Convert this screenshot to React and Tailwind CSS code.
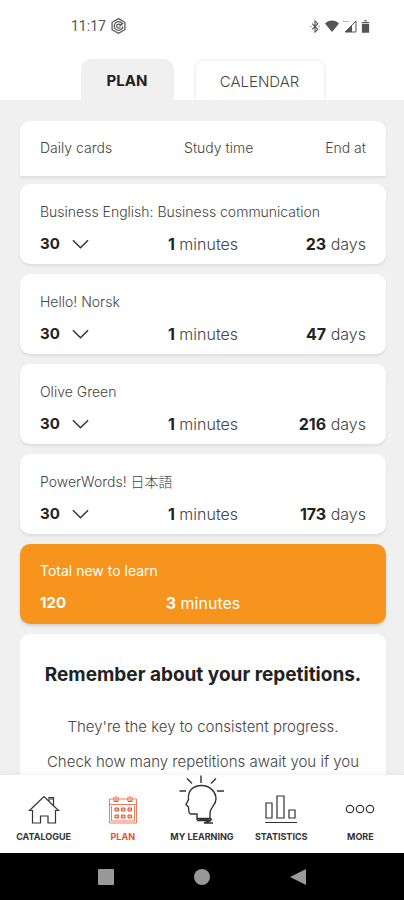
import { useState } from 'react';

const initialCourses = [
  { id: 1, name: 'Business English: Business communication', cards: 30, minutes: 1, days: 23 },
  { id: 2, name: 'Hello! Norsk', cards: 30, minutes: 1, days: 47 },
  { id: 3, name: 'Olive Green', cards: 30, minutes: 1, days: 216 },
  { id: 4, name: 'PowerWords! 日本語', cards: 30, minutes: 1, days: 173 },
];

const StatusBar = () => (
  <div className="flex items-center justify-between pt-4 pr-[34px] pl-[71px] text-[#555]">
    <div className="flex items-center gap-1">
      <span className="font-['Roboto',sans-serif] text-[14px] leading-5 font-normal">11:17</span>
      <svg width="17" height="18" viewBox="0 0 18 18" fill="none" stroke="currentColor" strokeWidth="1.3">
        <path d="M9 1.2l6.8 3.9v7.8L9 16.8l-6.8-3.9V5.1z" />
        <path d="M12.8 6.4A4.6 4.6 0 1 0 13.6 9.6" />
        <path d="M11 7.8A2.2 2.2 0 1 0 11 10.4M10 9.2l4-3.4" />
      </svg>
    </div>
    <div className="flex items-center gap-1">
      <svg width="12" height="13" viewBox="0 0 12 14" fill="none" stroke="currentColor" strokeWidth="1.2">
        <path d="M3 4l6 6-3 3V1l3 3-6 6" />
        <path d="M1 7h1M10 7h1" />
      </svg>
      <svg width="14" height="12" viewBox="0 0 14 12" fill="currentColor">
        <path d="M7 12L0 3.4C4-.6 10-.6 14 3.4z" />
      </svg>
      <svg width="14" height="13" viewBox="0 0 14 13">
        <path d="M13 1v11H2z" fill="none" stroke="currentColor" strokeWidth="1" />
        <path d="M9 5v7H2z" fill="currentColor" />
        <path d="M0 1.5h6" stroke="currentColor" strokeWidth="1" strokeDasharray="1.5 0.7" opacity="0.6" />
      </svg>
      <svg width="9" height="13" viewBox="0 0 10 14" fill="currentColor">
        <path d="M3.5 0h3v1.2h-3z" />
        <path d="M1 2h8v1.5H1zM1 4.3h8V14H1z" />
      </svg>
    </div>
  </div>
);

const Course = ({ course, onChange }) => (
  <div className="h-20 rounded-[10px] bg-white px-5 pt-4 shadow-[0_2px_3px_rgba(0,0,0,0.08)]">
    <label htmlFor={`cards-${course.id}`} className="block truncate text-[14px] leading-6">
      {course.name}
    </label>
    <div className="mt-2 grid grid-cols-3 items-center text-[16px] leading-6">
      <div className="flex items-center gap-3">
        <select
          id={`cards-${course.id}`}
          value={course.cards}
          onChange={(e) => onChange(course.id, Number(e.target.value))}
          className="w-5 appearance-none bg-transparent text-[15px] font-bold text-[#222]"
        >
          <option value={10}>10</option>
          <option value={20}>20</option>
          <option value={30}>30</option>
        </select>
        <svg width="17" height="10" viewBox="0 0 18 10" fill="none" stroke="#333" strokeWidth="1.6" className="pointer-events-none">
          <path d="M1 1l8 8 8-8" />
        </svg>
      </div>
      <div className="text-center">
        <b className="font-bold text-[#222]">{course.minutes}</b> minutes
      </div>
      <div className="text-right">
        <b className="font-bold text-[#222]">{course.days}</b> days
      </div>
    </div>
  </div>
);

const HomeIcon = () => (
  <svg width="32" height="30" viewBox="0 0 32 30" fill="none" stroke="currentColor" strokeWidth="1.2">
    <path d="M4.5 15.500H1.5L16 1.500l14.500 14h-3V28H20v-7h-7.500v7h-8z" />
    <path d="M21 6V2.500h4.500V10.500M22 4h3" />
  </svg>
);

const PlanIcon = () => (
  <svg width="30" height="30" viewBox="0 0 30 30" fill="none" stroke="currentColor" strokeWidth="1">
    <path d="M6 4H1.500v24h27V4H24M10 4h10M1.500 9.500h27M3.500 11v15h23V11" strokeOpacity="0.75" />
    <path d="M6 2v4.500h4V2M20 2v4.500h4V2M8 1v5M22 1v5" />
    <g fill="currentColor" fillOpacity="0.35">
      <path d="M7 13h3.500v3H7zM13.500 13H17v3h-3.500zM20 13h3.500v3H20z" />
      <path d="M7 20h3.500v3H7zM13.500 20H17v3h-3.500zM20 20h3.500v3H20z" />
    </g>
  </svg>
);

const HeadIcon = () => (
  <svg width="46" height="50" viewBox="0 0 46 50" fill="none" stroke="currentColor" strokeWidth="1.4">
    <path d="M18 45v-6h-6c-2 0-2.500-2-2.500-7L7 29.500l2.500-5C8.500 16 14 10.500 22.500 10.500S37 17 37 24c0 6.500-6 8-6 14v5l2 2" />
    <path d="M18 43.500h14l-14 2h14l-7 2.500h9" />
    <path d="M22 .5v7.500M8 3.500l5 5M37 3.500l-5 5M.5 16H7M38 16h7" />
  </svg>
);

const StatsIcon = () => (
  <svg width="34" height="30" viewBox="0 0 34 30" fill="none" stroke="currentColor" strokeWidth="1.2">
    <path d="M2 8h6v15H2zM13 1h7v22h-7zM25 15h6v8h-6zM1 27.500h32" />
  </svg>
);

const MoreIcon = () => (
  <svg width="30" height="30" viewBox="0 0 30 30" fill="none" stroke="currentColor" strokeWidth="1.2">
    <circle cx="5" cy="14" r="3.7" />
    <circle cx="15" cy="14" r="3.7" />
    <circle cx="25" cy="14" r="3.7" />
  </svg>
);

const navItems = [
  { label: 'CATALOGUE', icon: HomeIcon },
  { label: 'PLAN', icon: PlanIcon, active: true },
  { label: 'MY LEARNING', icon: HeadIcon },
  { label: 'STATISTICS', icon: StatsIcon },
  { label: 'MORE', icon: MoreIcon },
];

const App = () => {
  const [courses, setCourses] = useState(initialCourses);
  const total = courses.reduce((sum, c) => sum + c.cards, 0);

  const changeCards = (id, cards) => {
    setCourses(courses.map((c) => (c.id === id ? { ...c, cards } : c)));
  };

  return (
    <div className="flex h-screen flex-col bg-[#f0f0f0] font-['Inter','Noto_Sans_CJK_JP',sans-serif] font-light text-[#444]">
      <header className="shrink-0 bg-white">
        <StatusBar />
        <div className="mt-[23px] flex justify-center gap-5 pl-[2px]">
          <button className="h-[41px] w-[93px] rounded-t-[10px] bg-[#f0f0f0] pt-1 text-[15px] font-bold text-[#222]">PLAN</button>
          <button className="h-[41px] w-[132px] rounded-t-[10px] border-2 border-b-0 border-[#f5f5f5] pt-1 text-[15px]">CALENDAR</button>
        </div>
      </header>

      <main className="min-h-0 flex-1 overflow-hidden pt-[21px] pr-[18px] pl-5">
        <div className="flex h-[55px] items-center justify-between rounded-t-[10px] bg-white px-5 pb-[2px] text-[14px] shadow-[0_2px_3px_rgba(0,0,0,0.08)]">
          <span>Daily cards</span>
          <span>Study time</span>
          <span>End at</span>
        </div>
        <div className="mt-2 flex flex-col gap-[10px]">
          {courses.map((course) => (
            <Course key={course.id} course={course} onChange={changeCards} />
          ))}
          <div className="h-20 rounded-[10px] bg-[#f7941d] px-5 pt-[15px] font-normal text-white shadow-[0_2px_3px_rgba(0,0,0,0.12)]">
            <p className="text-[14px] leading-6">Total new to learn</p>
            <div className="mt-2 grid grid-cols-3 text-[16px] leading-6">
              <b className="text-[15px] font-bold">{total}</b>
              <div className="text-center">
                <b className="font-bold">3</b> minutes
              </div>
            </div>
          </div>
          <section className="rounded-t-[10px] bg-white px-5 pt-[27px] text-center">
            <h2 className="text-[19px] leading-7 font-bold whitespace-nowrap text-[#222]">Remember about your repetitions.</h2>
            <p className="mt-[26px] text-[15px] leading-6">They're the key to consistent progress.</p>
            <p className="mt-[11px] pb-6 text-[15px] leading-6">Check how many repetitions await you if you</p>
          </section>
        </div>
      </main>

      <nav className="relative z-10 grid h-[78px] shrink-0 grid-cols-5 bg-white pr-1 pl-1 shadow-[0_-2px_4px_rgba(0,0,0,0.04)]">
        {navItems.map(({ label, icon: Icon, active }) => (
          <a
            key={label}
            href="#"
            className={`flex flex-col items-center justify-end gap-[6px] pb-[13px] text-[9px] leading-3 font-bold whitespace-nowrap ${active ? 'text-[#f04e23]' : 'text-[#333]'}`}
          >
            <Icon />
            <span>{label}</span>
          </a>
        ))}
      </nav>

      <div className="flex h-[47px] shrink-0 items-center justify-center gap-20 bg-black">
        <svg width="16" height="16" viewBox="0 0 16 16" fill="#999">
          <rect width="16" height="16" rx="1" />
        </svg>
        <svg width="16" height="16" viewBox="0 0 16 16" fill="#999">
          <circle cx="8" cy="8" r="8" />
        </svg>
        <svg width="16" height="16" viewBox="0 0 16 16" fill="#999">
          <path d="M16 0v16L0 8z" />
        </svg>
      </div>
    </div>
  );
};

export default App;
